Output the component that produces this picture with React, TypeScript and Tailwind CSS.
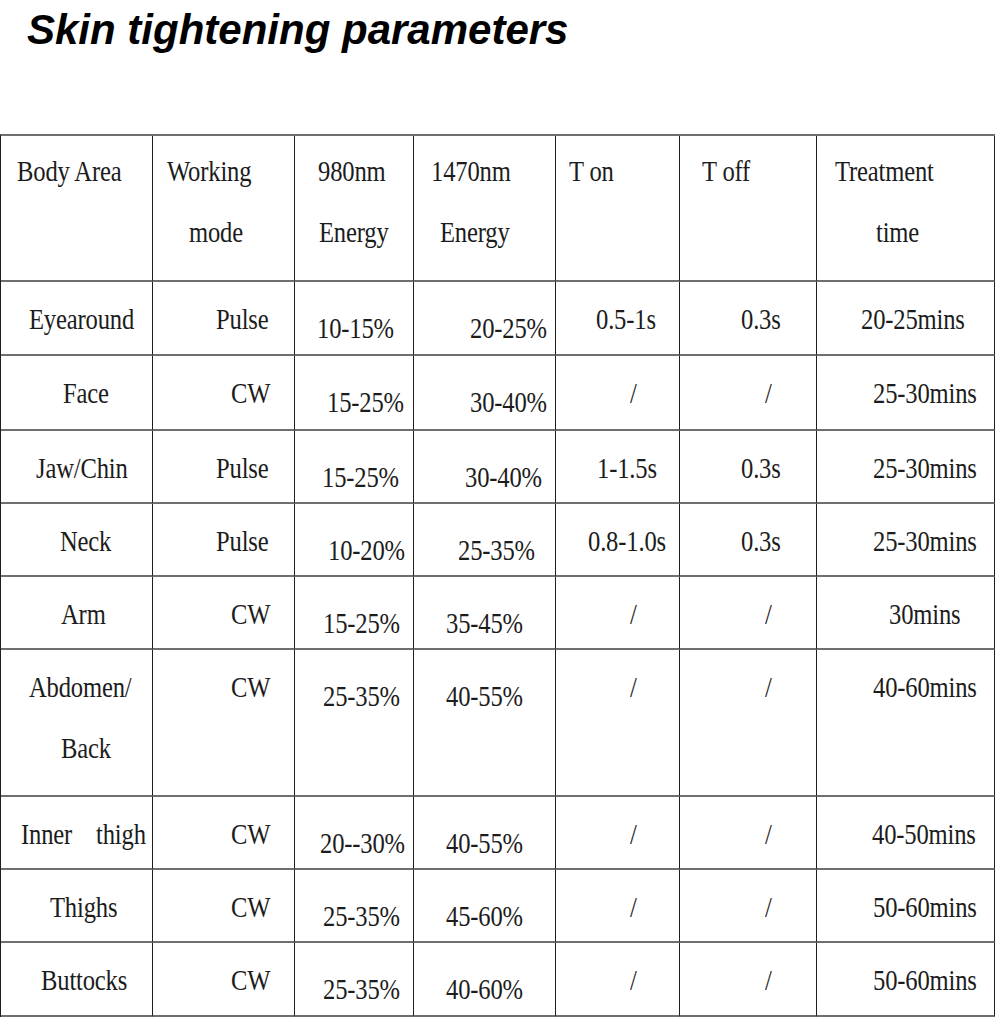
import React from "react";

type Line = { t: string; pl: string };
type CellSpec = { lines: Line[]; low?: boolean };

const HEIGHTS = [
  "h-[146px]",
  "h-[74px]",
  "h-[75px]",
  "h-[73px]",
  "h-[73px]",
  "h-[73px]",
  "h-[147px]",
  "h-[73px]",
  "h-[73px]",
  "h-[74px]",
];

const c = (t: string, pl: string, low?: boolean): CellSpec => ({ lines: [{ t, pl }], low });
const c2 = (a: string, apl: string, b: string, bpl: string): CellSpec => ({
  lines: [
    { t: a, pl: apl },
    { t: b, pl: bpl },
  ],
});

const ROWS: CellSpec[][] = [
  [
    c("Body Area", "pl-[16px]"),
    c2("Working", "pl-[14px]", "mode", "pl-[36px]"),
    c2("980nm", "pl-[23px]", "Energy", "pl-[24px]"),
    c2("1470nm", "pl-[17px]", "Energy", "pl-[26px]"),
    c("T on", "pl-[13px]"),
    c("T off", "pl-[22px]"),
    c2("Treatment", "pl-[18px]", "time", "pl-[59px]"),
  ],
  [
    c("Eyearound", "pl-[28px]"),
    c("Pulse", "pl-[63px]"),
    c("10-15%", "pl-[22px]", true),
    c("20-25%", "pl-[56px]", true),
    c("0.5-1s", "pl-[40px]"),
    c("0.3s", "pl-[61px]"),
    c("20-25mins", "pl-[44px]"),
  ],
  [
    c("Face", "pl-[62px]"),
    c("CW", "pl-[78px]"),
    c("15-25%", "pl-[32px]", true),
    c("30-40%", "pl-[56px]", true),
    c("/", "pl-[74px]"),
    c("/", "pl-[85px]"),
    c("25-30mins", "pl-[56px]"),
  ],
  [
    c("Jaw/Chin", "pl-[35px]"),
    c("Pulse", "pl-[63px]"),
    c("15-25%", "pl-[27px]", true),
    c("30-40%", "pl-[51px]", true),
    c("1-1.5s", "pl-[41px]"),
    c("0.3s", "pl-[61px]"),
    c("25-30mins", "pl-[56px]"),
  ],
  [
    c("Neck", "pl-[59px]"),
    c("Pulse", "pl-[63px]"),
    c("10-20%", "pl-[33px]", true),
    c("25-35%", "pl-[44px]", true),
    c("0.8-1.0s", "pl-[32px]"),
    c("0.3s", "pl-[61px]"),
    c("25-30mins", "pl-[56px]"),
  ],
  [
    c("Arm", "pl-[60px]"),
    c("CW", "pl-[78px]"),
    c("15-25%", "pl-[28px]", true),
    c("35-45%", "pl-[32px]", true),
    c("/", "pl-[74px]"),
    c("/", "pl-[85px]"),
    c("30mins", "pl-[72px]"),
  ],
  [
    c2("Abdomen/", "pl-[28px]", "Back", "pl-[60px]"),
    c("CW", "pl-[78px]"),
    c("25-35%", "pl-[28px]", true),
    c("40-55%", "pl-[32px]", true),
    c("/", "pl-[74px]"),
    c("/", "pl-[85px]"),
    c("40-60mins", "pl-[56px]"),
  ],
  [
    c("Inner\u00a0\u00a0\u00a0\u00a0thigh", "pl-[20px]"),
    c("CW", "pl-[78px]"),
    c("20--30%", "pl-[25px]", true),
    c("40-55%", "pl-[32px]", true),
    c("/", "pl-[74px]"),
    c("/", "pl-[85px]"),
    c("40-50mins", "pl-[55px]"),
  ],
  [
    c("Thighs", "pl-[49px]"),
    c("CW", "pl-[78px]"),
    c("25-35%", "pl-[28px]", true),
    c("45-60%", "pl-[32px]", true),
    c("/", "pl-[74px]"),
    c("/", "pl-[85px]"),
    c("50-60mins", "pl-[56px]"),
  ],
  [
    c("Buttocks", "pl-[40px]"),
    c("CW", "pl-[78px]"),
    c("25-35%", "pl-[28px]", true),
    c("40-60%", "pl-[32px]", true),
    c("/", "pl-[74px]"),
    c("/", "pl-[85px]"),
    c("50-60mins", "pl-[56px]"),
  ],
];

function Cell({ spec, h, header }: { spec: CellSpec; h: string; header: boolean }) {
  const pt = spec.low ? "pt-[31px]" : header ? "pt-[20px]" : "pt-[22px]";
  return (
    <div className={`${h} ${pt} flex flex-col overflow-hidden border-r border-r-[#1e1e1e] border-b-2 border-b-[#6f6f6f]`}>
      {spec.lines.map((ln, i) => (
        <div
          key={i}
          className={`${ln.pl} ${i > 0 ? "mt-[31px]" : ""} h-[30px] leading-[30px] whitespace-nowrap`}
        >
          <span className="inline-block origin-left scale-x-[0.82] tracking-[-0.2px]">{ln.t}</span>
        </div>
      ))}
    </div>
  );
}

export default function App() {
  return (
    <div className="w-[997px] h-[1018px] overflow-hidden bg-white">
      <h1 className="h-[134px] pt-[9px] pl-[27px] whitespace-nowrap font-['Liberation_Sans',Arial,sans-serif] text-[42px] leading-[42px] font-bold italic text-black">
        Skin tightening parameters
      </h1>
      <div className="grid w-[995px] grid-cols-[152px_142px_119px_142px_124px_137px_178px] border-l border-l-[#1e1e1e] border-t-2 border-t-[#6f6f6f] font-['Liberation_Serif','Times_New_Roman',serif] text-[30px] text-[#1c1c1c]">
        {ROWS.map((row, ri) =>
          row.map((spec, ci) => (
            <Cell key={`${ri}-${ci}`} spec={spec} h={HEIGHTS[ri]} header={ri === 0} />
          ))
        )}
      </div>
    </div>
  );
}
